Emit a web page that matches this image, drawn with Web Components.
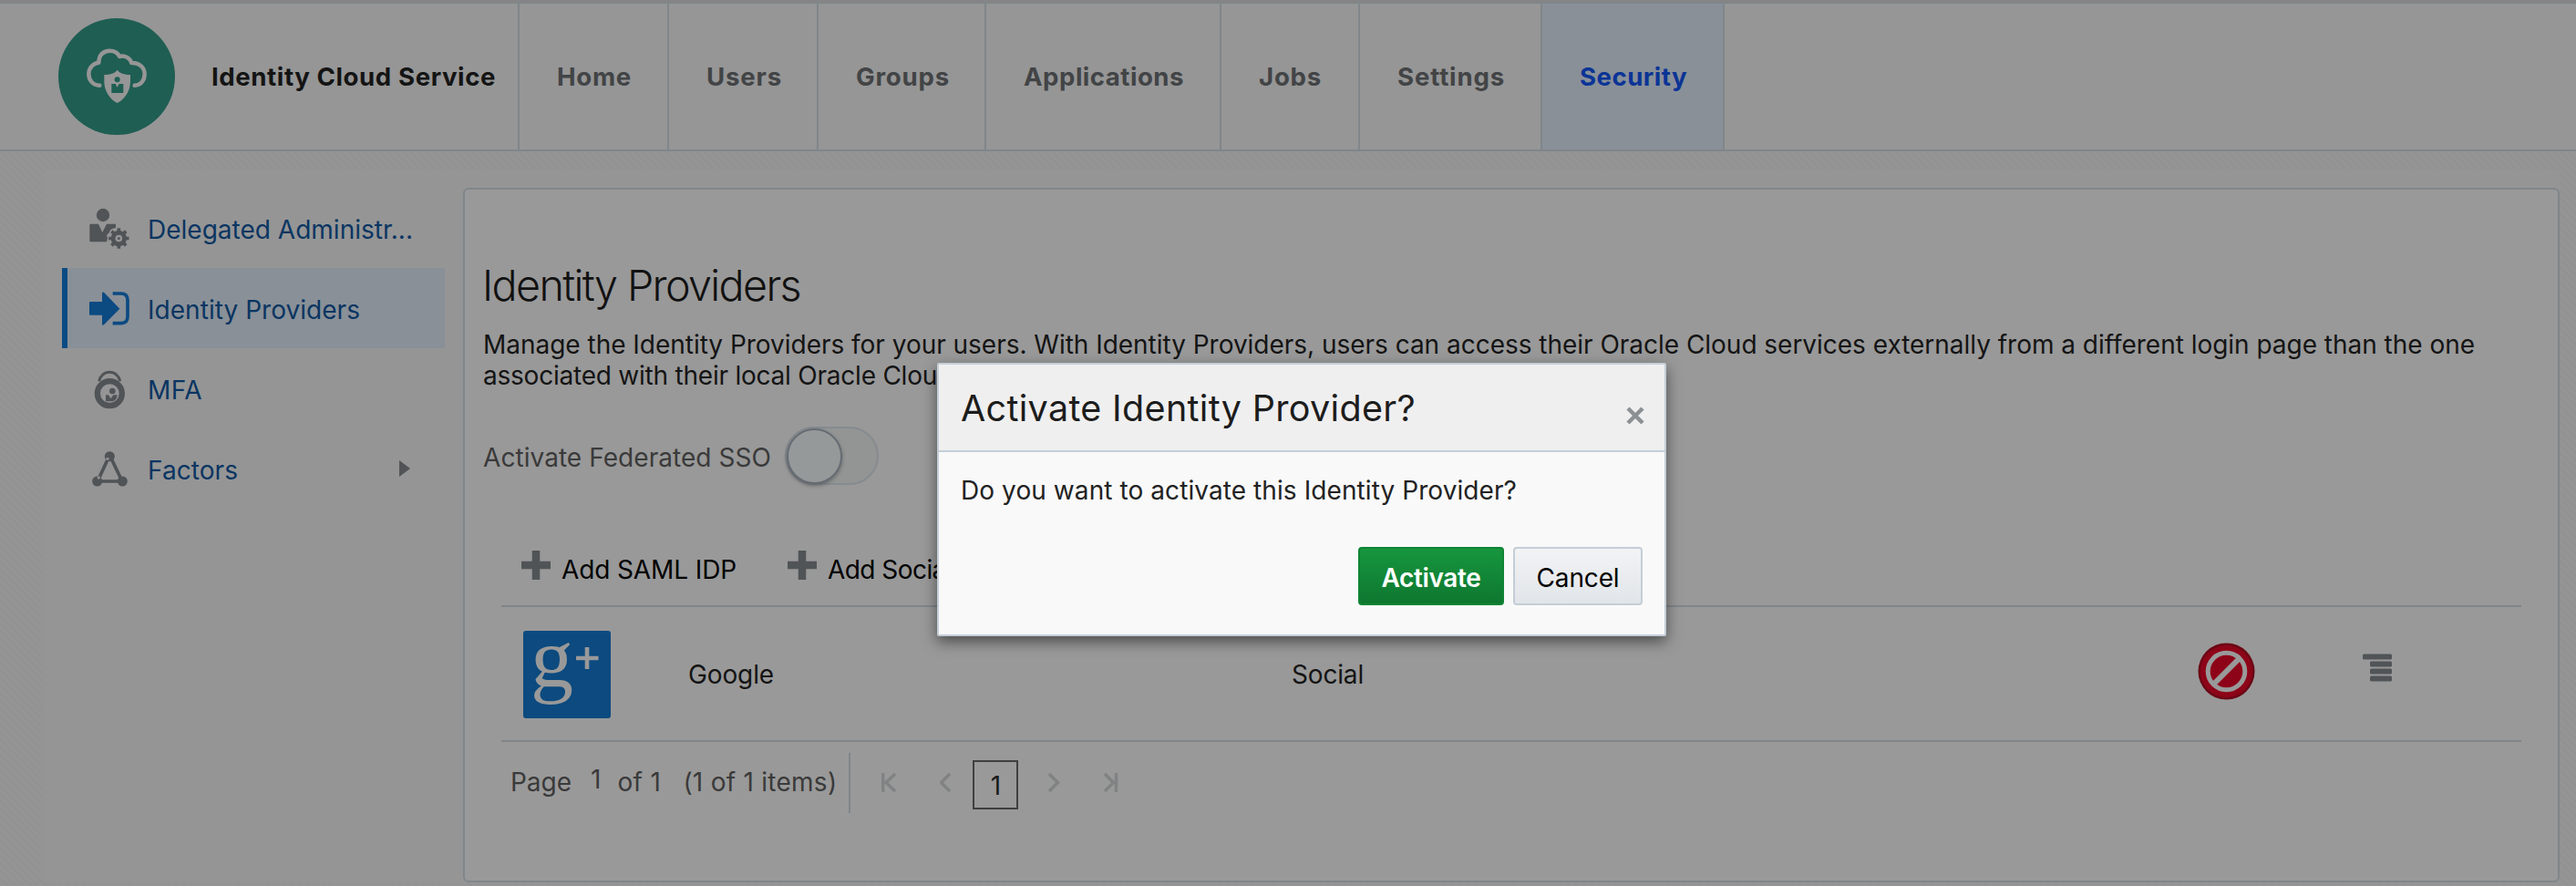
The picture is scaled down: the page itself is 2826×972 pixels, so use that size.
<!DOCTYPE html>
<html lang="en">
<head>
<meta charset="utf-8">
<title>Identity Cloud Service</title>
<style>
html,body{margin:0;padding:0}
body{width:2826px;height:972px;overflow:hidden;position:relative;
font:400 28px/34px Inter,"Liberation Sans",sans-serif;color:#141414;
background:repeating-linear-gradient(45deg,#929292 0,#959595 3px,#929292 6px)}
</style>
</head>
<body>
<idcs-app></idcs-app>
<script>
const define=(name,html)=>customElements.define(name,class extends HTMLElement{
  constructor(){
    super();
    const t=document.createElement('template');
    t.innerHTML='<style>*{box-sizing:border-box}svg{display:block;flex:none}</style>'+html;
    this.attachShadow({mode:'open'}).append(t.content.cloneNode(true));
  }
});

define('idcs-logo',`<style>:host{display:block;width:136px;height:136px}</style>
<svg width="136" height="136" viewBox="0 0 408 408"><circle cx="204" cy="204" r="192" fill="#1f5e53"/>
<path d="M148 233C125 233 112 215 112 196C112 176 126 160 145 158C145 134 160 119 181 119C196 119 208 126 213 138C232 133 248 143 253 159C277 157 296 174 296 196C296 217 283 233 263 233" fill="none" stroke="#969696" stroke-width="13.5" stroke-linecap="round" stroke-linejoin="round"/>
<path d="M206 182C198 193 184 198 163 198V222C164 255 184 280 206 291C228 280 248 255 249 222V198C228 198 214 193 206 182Z" fill="#969696"/>
<circle cx="206" cy="214" r="9" fill="#1f5e53"/><path d="M187 228H200L206 239L212 228H226V258H187Z" fill="#1f5e53"/></svg>`);

define('nav-tab',`<style>:host{display:flex;align-items:center;height:160px;box-sizing:border-box;padding:0 0 0 41px;border-left:2px solid #80868a;font-weight:700;font-size:27.600px;color:#424446;line-height:34px}
:host([active]){background:#899098;color:#0b3496;border-right:2px solid #80868a}</style><slot></slot>`);

define('idcs-header',`<style>:host{display:flex;box-sizing:border-box;height:166px;background:#969696;border-top:2px solid #858585;border-bottom:2px solid #80868a}
.in{display:flex;flex:1;border-top:2px solid #80868a}
.brand{display:flex;width:568px;padding:12px 0 0 60px;gap:36px}
.brand fit-text{font-weight:700;font-size:27.600px;color:#141414;margin-top:51px}</style>
<div class="in"><div class="brand"><idcs-logo></idcs-logo><fit-text w="312">Identity Cloud Service</fit-text></div>
<nav-tab style="width:164px"><fit-text w="82">Home</fit-text></nav-tab>
<nav-tab style="width:164px"><fit-text w="83">Users</fit-text></nav-tab>
<nav-tab style="width:184px"><fit-text w="103">Groups</fit-text></nav-tab>
<nav-tab style="width:258px"><fit-text w="176">Applications</fit-text></nav-tab>
<nav-tab style="width:152px"><fit-text w="69">Jobs</fit-text></nav-tab>
<nav-tab style="width:200px"><fit-text w="118">Settings</fit-text></nav-tab>
<nav-tab active style="width:202px"><fit-text w="118">Security</fit-text></nav-tab></div>`);

define('side-item',`<style>:host{display:flex;align-items:center;box-sizing:border-box;width:420px;height:88px;padding-left:30px;color:#0a3562}
.ic{width:64px;height:52px;flex:none}.t{padding-top:4px;flex:1}.m{width:50px}
:host([active]){background:#899097;border-left:6px solid #0c4a82;padding-left:24px}</style>
<div class="ic"><slot name="icon"></slot></div><div class="t"><slot></slot></div><div class="m"><slot name="more"></slot></div>`);

define('side-menu',`<style>:host{display:block;width:420px;padding-top:20px}svg{overflow:visible}</style>
<side-item><svg slot="icon" width="52" height="52" viewBox="0 6 156 156" fill="#505457"><circle cx="45" cy="42" r="21.5"/><path d="M1 74Q1 71 4 71H30L43 99L57 71H87V84Q78 84 70 90L64 101L57 108L60 118L57 130H4Q1 130 1 127Z"/>
<g stroke="#505457" stroke-width="11"><path d="M97 85V152M63.500 118.500H130.500M73.300 94.800L120.700 142.200M73.300 142.200L120.700 94.800"/></g><circle cx="97" cy="118.500" r="26"/><circle cx="97" cy="118.500" r="8" fill="#505457" stroke="#959595" stroke-width="7"/></svg><fit-text w="291">Delegated Administr...</fit-text></side-item>
<side-item active><svg slot="icon" width="52" height="52" viewBox="0 -1 156 156"><path d="M3 56H42V28Q43 23 48 25L100 79L48 132Q43 135 42 131V100H3Q0 100 0 97V59Q0 56 3 56Z" fill="#0c4a82"/><path d="M77 29H104Q126 29 126 51V105Q126 127 104 127H77" fill="none" stroke="#0c4a82" stroke-width="11"/></svg><fit-text w="233">Identity Providers</fit-text></side-item>
<side-item><svg slot="icon" width="52" height="52" viewBox="0 -3 156 156"><path d="M32 52A35 36 0 0 1 101 52" fill="none" stroke="#505457" stroke-width="9"/><circle cx="67" cy="92" r="40.500" fill="none" stroke="#505457" stroke-width="19"/><circle cx="76" cy="84" r="10" fill="#505457"/><path d="M54 97H63L71 109L79 97H92Q91 113 77 118H54Z" fill="#505457"/></svg><fit-text w="60">MFA</fit-text></side-item>
<side-item><svg slot="icon" width="52" height="52" viewBox="0 -1 156 156"><path d="M67 33L108 119H27Z" fill="none" stroke="#505457" stroke-width="11"/><g fill="#505457"><circle cx="67" cy="37" r="16.500"/><circle cx="26" cy="119" r="16.500"/><circle cx="109" cy="119" r="16.500"/></g><circle cx="60" cy="45" r="5" fill="#8f9091"/><circle cx="31" cy="107" r="5" fill="#8f9091"/></svg><fit-text w="99">Factors</fit-text><svg slot="more" width="13" height="20" viewBox="0 0 13 20"><path d="M0 1L12 10L0 19Z" fill="#505457"/></svg></side-item>`);

define('toggle-switch',`<style>:host{display:block;box-sizing:border-box;width:103px;height:64px;border:2px solid #868b90;border-radius:32px;background:#929594}
i{display:block;width:61px;height:61px;border:2px solid #666c74;border-radius:50%;background:#969999;box-shadow:0 2px 4px rgba(0,0,0,.3)}</style><i></i>`);

define('add-action',`<style>:host{display:flex;color:#000;gap:12px}fit-text{margin-top:3px}</style>
<svg width="32" height="32"><path d="M16 0V32M0 16H32" stroke="#505457" stroke-width="8.500"/></svg><slot></slot>`);

define('idp-row',`<style>:host{display:grid;grid-template-columns:181px 662px 994px 181px 1fr;height:150px;box-sizing:border-box;padding:26px 0 0 24px;border-top:2px solid #80868a;border-bottom:2px solid #80868a}
.g{width:96px;height:96px;overflow:visible}.t{padding-top:31px}</style>
<svg class="g" viewBox="0 0 96 96"><rect width="96" height="96" rx="3" fill="#0c4a7f"/><text x="8" y="60.500" font-family="Liberation Serif,serif" font-weight="400" font-size="94" fill="#999">g</text><path d="M70 18V42M58 30H82.500" stroke="#999" stroke-width="4.600"/></svg>
<div class="t"><fit-text w="94">Google</fit-text></div><div class="t"><fit-text w="79">Social</fit-text></div>
<svg width="64" height="64" style="margin:13px 0 0 0"><circle cx="31.500" cy="31.500" r="31" fill="#6b0714"/><circle cx="31.500" cy="31.500" r="28.500" fill="#8d0418"/><circle cx="31.500" cy="31.500" r="20.300" fill="none" stroke="#999" stroke-width="5"/><path d="M18 45L45 18" stroke="#999" stroke-width="6"/></svg>
<svg width="32" height="32" style="margin:25px 0 0 0"><g fill="#505457"><rect y=".5" width="32" height="6" rx="1.500"/><rect x="8" y="8.500" width="24" height="6" rx="1.500"/><rect x="8" y="16.500" width="24" height="6" rx="1.500"/><rect x="8" y="24.500" width="24" height="6" rx="1.500"/></g></svg>`);

define('page-nav',`<style>:host{display:flex;height:66px;margin-top:12px;padding-left:10px;color:#3a3a3a}
fit-text{margin-top:15px}.sep{width:2px;height:66px;background:#80868a;margin:0 34px 0 13px}
.cur{display:flex;justify-content:center;width:50px;height:54px;margin:8px 56px 0 24px;border:2px solid #3f3f3f;color:#1a1a1a;padding-top:9px}.cur span{line-height:34px}
svg{margin-top:21px;fill:none;stroke:#808283;stroke-width:3.400}</style>
<fit-text w="67">Page</fit-text><fit-text style="margin:12px 0 0 21px" w="12">1</fit-text><fit-text style="margin-left:18px" w="48">of 1</fit-text><fit-text style="margin-left:24px" w="169">(1 of 1 items)</fit-text>
<div class="sep"></div>
<svg width="64" height="24"><path d="M1.700 1V22M15 2L5 11.500L15 21"/></svg><svg width="12" height="24"><path d="M11 2L1.500 11.500L11 21"/></svg>
<div class="cur"><span>1</span></div>
<svg width="20" height="24" style="margin-left:-23px"><path d="M1 2L10.500 11.500L1 21"/></svg><svg width="16" height="24" style="margin-left:41px"><path d="M1 2L10.500 11.500L1 21M13.500 1V22"/></svg>`);

define('main-panel',`<style>:host{display:block;box-sizing:border-box;width:2300px;height:762px;margin-top:20px;background:#999;border:2px solid #80868a;border-radius:6px}
h1{margin:75px 0 0 19px;font:300 46.600px/60px Inter,sans-serif;color:#111}
.desc{margin:18px 0 0 20px;height:68px}.desc fit-text{display:block;width:max-content}
.sso{display:flex;align-items:center;gap:15px;margin:39px 0 0 20px;height:64px;color:#3a3a3a}.sso fit-text{padding-top:4px}
.add{display:flex;gap:56px;margin:72px 0 28px 62px;height:32px}.add fit-text{margin-top:4px}
idp-row{margin:0 40px}page-nav{margin-left:40px}</style>
<h1><fit-text w="349">Identity Providers</fit-text></h1>
<div class="desc"><fit-text w="2185">Manage the Identity Providers for your users. With Identity Providers, users can access their Oracle Cloud services externally from a different login page than the one</fit-text><fit-text w="515">associated with their local Oracle Cloud</fit-text></div>
<div class="sso"><fit-text w="316">Activate Federated SSO</fit-text><toggle-switch></toggle-switch></div>
<div class="add"><add-action><fit-text w="192">Add SAML IDP</fit-text></add-action><add-action><fit-text w="136">Add Social</fit-text></add-action></div>
<idp-row></idp-row><page-nav></page-nav>`);

define('push-button',`<style>:host{display:flex;justify-content:center;box-sizing:border-box;height:64px;padding-top:15px;border:2px solid #c4ced7;border-radius:4px;background:linear-gradient(#f2f3f5,#e1e5e9);color:#000}
:host([primary]){background:linear-gradient(#16963e,#0e7730);border-color:#0f8435;color:#fff;font-weight:600}</style><slot></slot>`);

define('confirm-dialog',`<style>:host{position:absolute;left:1028px;top:398px;width:800px;height:300px;box-sizing:border-box;display:flex;flex-direction:column;background:#f9f9f9;border:2px solid #c4ced7;border-radius:2px;box-shadow:0 6px 16px rgba(0,0,0,.5)}
header{display:flex;justify-content:space-between;height:96px;background:#efefef;border-bottom:2px solid #c4ced7;padding:24px 22px 0 24px;font-size:39.500px;line-height:48px;color:#1c1c1c}
header svg{margin-top:22px}.b{padding:25px 0 0 24px;height:104px;color:#222}.f{display:flex;justify-content:flex-end;gap:10px;padding-right:24px}</style>
<header><fit-text w="499">Activate Identity Provider?</fit-text><svg width="20" height="20"><path d="M2 2L18 18M18 2L2 18" stroke="#8b9094" stroke-width="4.500"/></svg></header>
<div class="b"><fit-text w="610">Do you want to activate this Identity Provider?</fit-text></div>
<div class="f"><push-button primary style="width:160px"><fit-text w="109">Activate</fit-text></push-button><push-button style="width:142px"><fit-text w="91">Cancel</fit-text></push-button></div>`);

define('idcs-app',`<style>:host{display:block}.work{display:flex;gap:20px;margin:20px 18px 0 48px;padding-left:20px;background:#959595;height:782px}</style>
<idcs-header></idcs-header><div class="work"><side-menu></side-menu><main-panel></main-panel></div><confirm-dialog></confirm-dialog>`);

/* Tracks a single line of text so that it occupies the width given in "w". */
customElements.define('fit-text',class extends HTMLElement{
  constructor(){
    super();
    this.attachShadow({mode:'open'}).innerHTML='<style>:host{display:inline-block;white-space:nowrap;vertical-align:top;flex:none}</style><slot></slot>';
  }
  connectedCallback(){
    const w=+this.getAttribute('w'),n=this.textContent.length;
    if(n>1)this.style.letterSpacing=(w-this.getBoundingClientRect().width)/n+'px';
  }
});
</script>
</body>
</html>
